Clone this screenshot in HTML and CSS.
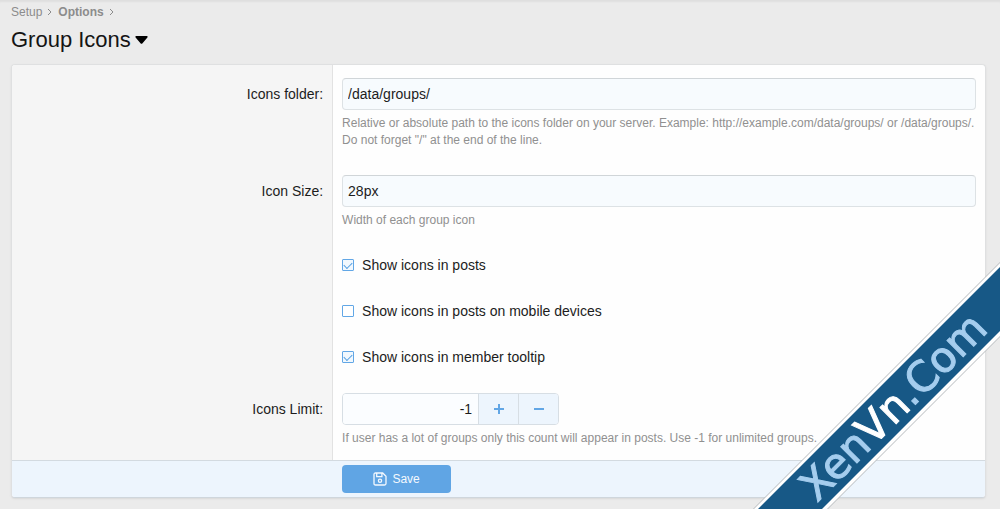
FILE: index.html
```html
<!DOCTYPE html>
<html lang="en">
<head>
<meta charset="utf-8">
<title>Group Icons</title>
<meta name="viewport" content="width=device-width, initial-scale=1">
<link rel="stylesheet" href="styles.css">
</head>
<body>
<header class="page-header">
  <nav class="crumbs" aria-label="Breadcrumb">
    <a href="#">Setup</a>
    <svg class="crumb-arrow" viewBox="0 0 5 8" aria-hidden="true"><path d="M1 1l3 3-3 3"/></svg>
    <a href="#" class="crumb-current">Options</a>
    <svg class="crumb-arrow" viewBox="0 0 5 8" aria-hidden="true"><path d="M1 1l3 3-3 3"/></svg>
  </nav>
  <h1 class="title">
    <button type="button" class="title-button">Group Icons
      <svg class="caret" viewBox="0 0 13 8" aria-hidden="true"><path d="M1 0h11q1.200.6.4 1.500L7.300 7.400q-.8.8-1.600 0L.6 1.500Q-.2.6 1 0z"/></svg>
    </button>
  </h1>
</header>
<form class="card">
  <div class="row">
    <div class="label"><label for="folder">Icons folder:</label></div>
    <div class="field">
      <input class="input" id="folder" type="text" value="/data/groups/">
      <p class="hint">Relative or absolute path to the icons folder on your server. Example: http://example.com/data/groups/ or /data/groups/.<br>Do not forget "/" at the end of the line.</p>
    </div>
  </div>
  <div class="row">
    <div class="label"><label for="size">Icon Size:</label></div>
    <div class="field">
      <input class="input" id="size" type="text" value="28px">
      <p class="hint">Width of each group icon</p>
    </div>
  </div>
  <div class="row">
    <div class="label"></div>
    <div class="field">
      <label class="choice"><input class="check" type="checkbox" checked>Show icons in posts</label>
    </div>
  </div>
  <div class="row">
    <div class="label"></div>
    <div class="field">
      <label class="choice"><input class="check" type="checkbox">Show icons in posts on mobile devices</label>
    </div>
  </div>
  <div class="row">
    <div class="label"></div>
    <div class="field">
      <label class="choice"><input class="check" type="checkbox" checked>Show icons in member tooltip</label>
    </div>
  </div>
  <div class="row">
    <div class="label"><label for="limit">Icons Limit:</label></div>
    <div class="field">
      <div class="stepper">
        <input class="stepper-input" id="limit" type="number" value="-1">
        <button class="step" type="button" aria-label="Increase"><svg viewBox="0 0 12 12" aria-hidden="true"><path d="M6 1v10M1 6h10"/></svg></button>
        <button class="step" type="button" aria-label="Decrease"><svg viewBox="0 0 12 12" aria-hidden="true"><path d="M1 6h10"/></svg></button>
      </div>
      <p class="hint">If user has a lot of groups only this count will appear in posts. Use -1 for unlimited groups.</p>
    </div>
  </div>
  <div class="row footer">
    <div class="footer-field">
      <button class="save" type="submit">
        <svg viewBox="0 0 14 14" aria-hidden="true"><path d="M2.500 1h7.200L13 4.300v7.200q0 1.500-1.500 1.500h-9Q1 13 1 11.500v-9Q1 1 2.500 1zM3.700 1.200v3.400h5.200V1.200"/><circle cx="7" cy="8.800" r="1.600"/></svg>
        Save
      </button>
    </div>
  </div>
</form>
<a class="ribbon" href="#" aria-label="XenVn.Com">
  <svg viewBox="0 0 250 250">
    <path class="ribbon-hairline" d="M1 252L252 1v75L76 252z"/>
    <path class="ribbon-edge" d="M2 252L252 2v73L75 252z"/>
    <path class="ribbon-band" d="M6 252L252 6v64L70 252z"/>
    <text class="ribbon-text" transform="translate(67 244) rotate(-45)">Xen<tspan class="ribbon-strong">Vn</tspan>.Com</text>
  </svg>
</a>
</body>
</html>
```
FILE: styles.css
```css
* {
  box-sizing: border-box;
}

body {
  margin: 0;
  padding: 4px 14px 10px 11px;
  background: #ebebeb;
  box-shadow: inset 0 3px 2px -1px #dfdfdf;
  color: #1c1c1c;
  font: 14px/19px "Liberation Sans", Arial, sans-serif;
}

button,
input {
  margin: 0;
  font: inherit;
  color: inherit;
}

.crumbs {
  display: flex;
  align-items: center;
  gap: 5px;
  height: 16px;
  font-size: 12px;
  line-height: 16px;
}

.crumbs a {
  color: #8c8c8c;
  text-decoration: none;
}

.crumbs .crumb-current {
  margin-left: 1px;
  font-weight: bold;
}

.crumb-arrow {
  width: 5px;
  height: 8px;
  fill: none;
  stroke: #8c8c8c;
}

.title {
  margin: 6px 0 10px;
  font-size: 22px;
  line-height: 28px;
  font-weight: normal;
}

.title-button {
  display: flex;
  align-items: center;
  gap: 4px;
  padding: 0;
  border: 0;
  background: none;
  color: #141414;
}

.caret {
  width: 13px;
  height: 8px;
}

.card {
  overflow: hidden;
  border: 1px solid #dfe0e1;
  border-bottom-color: #cfd6dc;
  border-radius: 4px;
  background: #fefefe;
  box-shadow: 0 1px 2px #d8d8d8;
}

.row {
  display: grid;
  grid-template-columns: 33% 1fr;
}

.label {
  padding: 20px 9px 0;
  border-right: 1px solid #e2e2e2;
  background: #f5f5f5;
  text-align: right;
}

.field {
  padding: 13px 9px;
}

.input {
  display: block;
  width: 100%;
  height: 32px;
  padding: 0 5px;
  border: 1px solid #dde2e5;
  border-top-color: #d0d5d8;
  border-radius: 4px;
  background: #f7fbfe;
}

.hint {
  margin: 5px 0 0;
  color: #909090;
  font-size: 12px;
  line-height: 17px;
}

.choice {
  display: flex;
  align-items: center;
  gap: 8px;
  line-height: 20px;
}

.check {
  display: grid;
  place-items: center;
  width: 12px;
  height: 12px;
  appearance: none;
  border: 1px solid #62a7e6;
  border-radius: 1px;
  background: #fff;
}

.check:checked {
  background: #f1f8fe;
}

.check:checked::before {
  content: "";
  width: 7px;
  height: 4px;
  margin-bottom: 2px;
  border: solid #559fe2;
  border-width: 0 0 1px 1px;
  transform: rotate(-45deg);
}

.stepper {
  display: flex;
  width: 217px;
  height: 32px;
  overflow: hidden;
  border: 1px solid #d7dee4;
  border-radius: 4px;
}

.stepper-input {
  flex: 1;
  min-width: 0;
  padding: 0 6px;
  border: 0;
  background: #fbfdff;
  text-align: right;
  appearance: textfield;
}

.stepper-input::-webkit-inner-spin-button {
  display: none;
}

.step {
  display: grid;
  place-items: center;
  width: 40px;
  padding: 0;
  border: 0;
  border-left: 1px solid #d7dee4;
  background: #edf5fd;
}

.step svg {
  width: 12px;
  height: 12px;
  stroke: #62a6e5;
  stroke-width: 2;
}

.footer {
  border-top: 1px solid #d3dae0;
  background: #edf5fd;
}

.footer-field {
  grid-column: 2;
  padding: 4px 9px;
}

.save {
  display: flex;
  align-items: center;
  justify-content: center;
  gap: 5px;
  width: 109px;
  height: 28px;
  border: 0;
  border-radius: 4px;
  background: #60a5e4;
  color: #f4f9fe;
  font-size: 12px;
}

.save svg {
  width: 14px;
  height: 14px;
  fill: none;
  stroke: #f4f9fe;
  stroke-width: 1.3;
}

.ribbon {
  position: fixed;
  right: 0;
  bottom: 0;
  width: 250px;
  height: 250px;
  pointer-events: none;
}

.ribbon svg {
  display: block;
  width: 100%;
  height: 100%;
}

.ribbon-hairline {
  fill: #b5b9bc;
}

.ribbon-edge {
  fill: #fff;
}

.ribbon-band {
  fill: #175886;
}

.ribbon-text {
  fill: #a5cdee;
  stroke: #a5cdee;
  stroke-width: 1;
  font: 42px "DejaVu Sans", sans-serif;
}

.ribbon-strong {
  fill: #fff;
  stroke: #fff;
}
```
